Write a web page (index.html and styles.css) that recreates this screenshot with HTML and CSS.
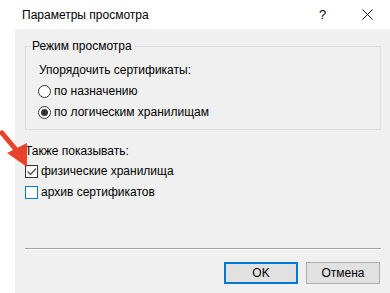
FILE: index.html
```html
<!DOCTYPE html>
<html lang="ru">
<head>
<meta charset="utf-8">
<title>Параметры просмотра</title>
<link rel="stylesheet" href="styles.css">
</head>
<body>
<div class="window">
  <div class="titlebar">
    <span class="title">Параметры просмотра</span>
    <span class="help">?</span>
    <span class="close">
      <svg width="11" height="11" viewBox="0 0 11 11"><path d="M0.5 0.5 L10.5 10.5 M10.5 0.5 L0.5 10.5" stroke="#111" stroke-width="1"/></svg>
    </span>
  </div>
  <div class="main">
    <div class="side"></div>
    <div class="content">
      <fieldset class="group">
        <legend class="legend">Режим просмотра</legend>
        <div class="group-inner">
          <div class="label">Упорядочить сертификаты:</div>
          <div class="row radio-row">
            <span class="radio"></span>
            <span class="row-text">по назначению</span>
          </div>
          <div class="row radio-row second">
            <span class="radio checked"></span>
            <span class="row-text">по логическим хранилищам</span>
          </div>
        </div>
      </fieldset>
      <div class="label also">Также показывать:</div>
      <div class="row check-row">
        <span class="checkbox">
          <svg width="11" height="11" viewBox="0 0 11 11"><path d="M1.5 5.5 L4.5 8.5 L10 2.5" fill="none" stroke="#555" stroke-width="1.3"/></svg>
        </span>
        <span class="row-text">физические хранилища</span>
      </div>
      <div class="row check-row second">
        <span class="checkbox focus"></span>
        <span class="row-text">архив сертификатов</span>
      </div>
      <div class="separator"></div>
      <div class="buttons">
        <button class="btn default">OK</button>
        <button class="btn">Отмена</button>
      </div>
    </div>
  </div>
  <svg class="arrow" width="36" height="50" viewBox="0 125 36 50">
    <line x1="2" y1="133" x2="18" y2="152" stroke="#e8412c" stroke-width="5" stroke-linecap="round"/>
    <polygon points="7,153 27,143 27,167" fill="#e8412c"/>
  </svg>
</div>
</body>
</html>
```

FILE: styles.css
```css
* { box-sizing: border-box; }
html, body { margin: 0; padding: 0; }
body {
  font-family: "Liberation Sans", Arial, sans-serif;
  font-size: 12px;
  color: #000;
  background: #f0f0f0;
}
.window {
  position: relative;
  width: 390px;
  height: 293px;
  display: flex;
  flex-direction: column;
  overflow: hidden;
}
.titlebar {
  height: 29px;
  background: #fff;
  display: flex;
  align-items: center;
  padding-left: 22px;
}
.title { flex: 1; line-height: 14px; }
.help {
  width: 12px;
  margin-right: 31px;
  line-height: 14px;
  font-size: 13px;
}
.close {
  width: 11px;
  height: 11px;
  margin-right: 17px;
  display: flex;
}
.main { flex: 1; display: flex; }
.side { width: 15px; background: #fff; }
.content {
  flex: 1;
  background: #f0f0f0;
  padding: 10px 9px 0 10px;
  display: flex;
  flex-direction: column;
}
.group {
  margin: 0;
  width: 356px;
  border: 1px solid #dcdcdc;
  padding: 10px 0 10px 5px;
}
.legend {
  padding: 0 2px 0 1px;
  line-height: 14px;
}
.group-inner { padding-left: 8px; }
.label { line-height: 14px; }
.row {
  display: flex;
  align-items: center;
  height: 14px;
  line-height: 14px;
}
.radio-row { margin-top: 7px; margin-left: -1px; }
.radio {
  width: 13px;
  height: 13px;
  border: 1px solid #333;
  border-radius: 50%;
  background: #fff;
  display: flex;
  align-items: center;
  justify-content: center;
  margin-right: 3px;
}
.radio.checked::after {
  content: "";
  width: 7px;
  height: 7px;
  border-radius: 50%;
  background: #333;
}
.also { margin-top: 14px; }
.check-row { margin-top: 6px; }
.check-row.second { margin-top: 7px; }
.checkbox {
  width: 13px;
  height: 13px;
  border: 1px solid #333;
  background: #fff;
  margin-right: 3px;
  display: flex;
}
.checkbox.focus { border-color: #0078d7; }
.separator {
  width: 356px;
  height: 2px;
  margin-top: 49px;
  border-top: 1px solid #a0a0a0;
  border-bottom: 1px solid #fff;
}
.buttons {
  width: 356px;
  margin-top: 12px;
  display: flex;
  justify-content: flex-end;
  gap: 8px;
  padding-right: 1px;
}
.btn {
  width: 74px;
  height: 22px;
  font-family: inherit;
  font-size: 12px;
  color: #000;
  background: #e1e1e1;
  border: 1px solid #adadad;
  padding: 0;
  margin: 0;
}
.btn.default { border: 2px solid #0078d7; }
.arrow {
  position: absolute;
  left: 0;
  top: 125px;
}
```
